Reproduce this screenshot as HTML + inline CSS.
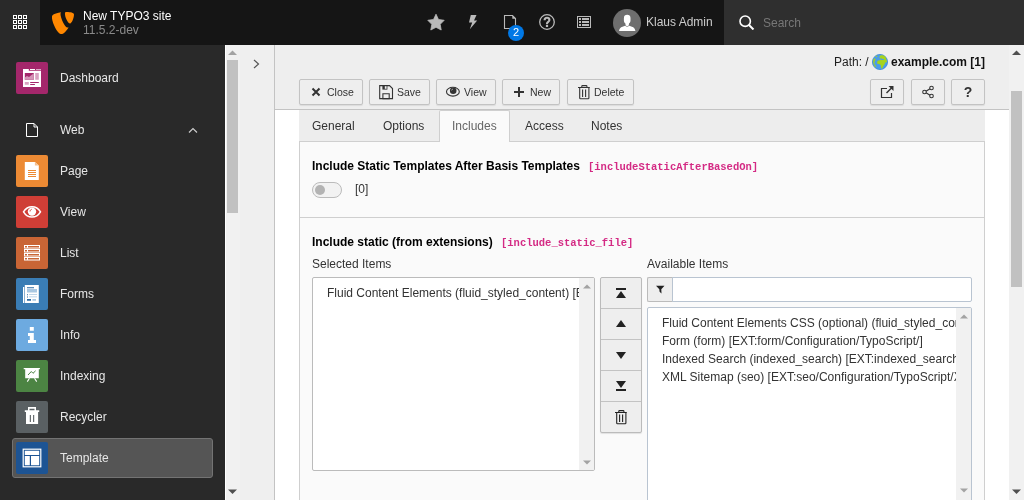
<!DOCTYPE html>
<html><head><meta charset="utf-8">
<style>
*{box-sizing:border-box;margin:0;padding:0}
html,body{width:1024px;height:500px;overflow:hidden;background:#fff;font-family:"Liberation Sans",sans-serif;font-size:12px;color:#333}
.abs{position:absolute}
#hdr{position:absolute;left:0;top:0;width:1024px;height:45px;background:#151515}
#grid{position:absolute;left:0;top:0;width:40px;height:45px;background:#292929}
#side{position:absolute;left:0;top:45px;width:225px;height:455px;background:#292929}
.mi{position:absolute;left:16px;width:32px;height:32px;border-radius:2px}
.ml{position:absolute;left:60px;color:#e6e6e6;font-size:12px;line-height:14px}
#sscroll{position:absolute;left:225px;top:45px;width:15px;height:455px;background:#f1f1f1;border-left:1px solid #fff}
#tree{position:absolute;left:240px;top:45px;width:35px;height:455px;background:#efefef;border-right:1px solid #c3c3c3}
#dochdr{position:absolute;left:275px;top:45px;width:734px;height:65px;background:#eee;border-bottom:1px solid #c3c3c3}
#body{position:absolute;left:275px;top:110px;width:734px;height:390px;background:#fff}
#pscroll{position:absolute;left:1009px;top:45px;width:15px;height:455px;background:#f1f1f1}
.btn{position:absolute;top:79px;height:26px;background:#eee;border:1px solid #c3c3c3;border-radius:2px;font-size:10.5px;line-height:24px;color:#333;box-shadow:0 1px 1px rgba(0,0,0,.08)}
.btn svg{position:absolute;left:8px;top:4px}
.btn span{position:absolute;top:0}
#root{position:absolute;left:0;top:0;width:1024px;height:500px;will-change:transform}
</style></head><body><div id="root">
<div id="hdr">
  <div id="grid">
    <svg class="abs" style="left:13px;top:15px" width="14" height="14" viewBox="0 0 14 14" fill="none" stroke="#fff" stroke-width="1"><rect x="0.5" y="0.5" width="3" height="3"/><rect x="5.5" y="0.5" width="3" height="3"/><rect x="10.5" y="0.5" width="3" height="3"/><rect x="0.5" y="5.5" width="3" height="3"/><rect x="5.5" y="5.5" width="3" height="3"/><rect x="10.5" y="5.5" width="3" height="3"/><rect x="0.5" y="10.5" width="3" height="3"/><rect x="5.5" y="10.5" width="3" height="3"/><rect x="10.5" y="10.5" width="3" height="3"/></svg>
  </div>
  <svg class="abs" style="left:52px;top:12px" width="22" height="22" viewBox="-1 0 24.5 24.5">
    <path fill="#ff8700" d="M17.5 17.2c-.4.1-.7.1-1.1.1-3.2 0-7.9-11.2-7.9-14.9 0-1.4.3-1.8.8-2.2C5.3 .7.8 2 -.6 3.8c-.3.4-.5 1.1-.5 1.9 0 5.8 6.2 19 10.6 19 2 0 5.4-3.300 8-7.500M15.4 0c4.100 0 8.100.7 8.100 2.900 0 4.500-2.800 9.900-4.300 9.900-2.600 0-5.800-7.300-5.800-10.900C13.400.3 14 0 15.400 0"/>
  </svg>
  <div class="abs" style="left:83px;top:9px;color:#fff;line-height:14px">New TYPO3 site</div>
  <div class="abs" style="left:83px;top:23px;color:#8a8a8a;line-height:14px">11.5.2-dev</div>

  <!-- toolbar icons -->
  <svg class="abs" style="left:427px;top:13px" width="18" height="18" viewBox="0 0 18 18"><path fill="#bababa" stroke="#bababa" stroke-width="0.8" stroke-linejoin="round" d="M9 1.2L11.500 6.500 17.200 7.300 13.200 11.300 14.200 17 9 14.300 3.800 17 4.800 11.300 .8 7.300 6.500 6.500z"/></svg>
  <svg class="abs" style="left:468px;top:14px" width="10" height="16" viewBox="0 0 10 16"><path fill="#bababa" d="M2.800 1h5.700L6 6.500h3.200L1.800 15.300 4.200 8.500H1z"/></svg>
  <svg class="abs" style="left:503px;top:14px" width="14" height="16" viewBox="0 0 14 16"><path fill="none" stroke="#bababa" stroke-width="1.100" d="M1.500 1.500h8l3 3v10h-11z"/><path fill="#bababa" d="M9.300 1.500v3.200h3.200z"/></svg>
  <div class="abs" style="left:508px;top:25px;width:16px;height:16px;border-radius:8px;background:#0078e6;color:#fff;font-size:11px;line-height:15px;text-align:center">2</div>
  <svg class="abs" style="left:539px;top:14px" width="16" height="16" viewBox="0 0 16 16"><circle cx="8" cy="8" r="7.300" fill="none" stroke="#bababa" stroke-width="1.300"/><path fill="none" stroke="#bababa" stroke-width="2.100" d="M5.600 6.300c0-1.600 1.100-2.500 2.400-2.500 1.400 0 2.400.9 2.400 2.200 0 1.800-2.400 1.800-2.400 3.600v.6"/><rect x="6.900" y="11" width="2.200" height="2" fill="#bababa"/></svg>
  <svg class="abs" style="left:577px;top:16px" width="14" height="12" viewBox="0 0 14 12"><rect x=".5" y=".5" width="13" height="11" fill="none" stroke="#bababa" stroke-width="1"/><g fill="#bababa"><rect x="2" y="2" width="2" height="2"/><rect x="5" y="2" width="7" height="2"/><rect x="2" y="5" width="2" height="2"/><rect x="5" y="5" width="7" height="2"/><rect x="2" y="8" width="2" height="2"/><rect x="5" y="8" width="7" height="2"/></g></svg>
  <div class="abs" style="left:613px;top:9px;width:28px;height:28px;border-radius:14px;background:#6e6e6e;overflow:hidden"><svg class="abs" style="left:0;top:0" width="28" height="28" viewBox="0 0 28 28"><path fill="#fff" d="M14.200 5.800c2 0 3.300 1.100 3.300 3.200v2.600c0 1.500-.8 2.600-1.600 3.100v1.600l-1.700 1.200-1.700-1.200v-1.600c-.8-.5-1.600-1.600-1.600-3.100V9c0-2.100 1.300-3.200 3.300-3.200zM6 22c.3-2.500 1.500-3.800 3.500-4.300l2.600-1 2.100 1.400 2.100-1.400 2.600 1c2 .5 3.200 1.800 3.500 4.300z"/></svg></div>
  <div class="abs" style="left:646px;top:15px;color:#ccc;line-height:14px">Klaus Admin</div>
  <div class="abs" style="left:724px;top:0;width:300px;height:45px;background:#2f2f2f"></div>
  <svg class="abs" style="left:739px;top:15px" width="16" height="15" viewBox="0 0 16 15"><circle cx="6.2" cy="6.2" r="5.2" fill="none" stroke="#fff" stroke-width="1.6"/><path d="M10 10l4.500 4.500" stroke="#fff" stroke-width="2"/></svg>
  <div class="abs" style="left:763px;top:16px;color:#777;line-height:14px">Search</div>
</div>

<div id="side">
  <div class="mi" style="top:17px;background:#a4276b"><svg width="32" height="32" viewBox="0 0 32 32"><path fill="#fff" d="M7 8.800h18V25H7z M7 7h5.800v2H7z M14 7h5v1h-5z"/><path fill="#fff" fill-opacity=".6" d="M20 7h5v1h-5z"/><path fill="#a4276b" d="M8.800 11h9v6.800h-9z"/><path fill="#d494b6" d="M8.800 17.800v-2.300l2.200-1.500 2 1 2.500-2 2.300-1.500v6.300z"/><path fill="#d9a3c1" d="M19.200 11h3.600v6.800h-3.600zM8.800 20h4v2.800h-4z"/><path fill="#a4276b" d="M14.200 20h8.600v1h-8.600zM14.200 22h4.700v1h-4.700z"/></svg></div>
  <div class="ml" style="top:26px">Dashboard</div>
  <svg class="abs" style="left:25px;top:78px" width="14" height="14" viewBox="0 0 14 14"><path fill="none" stroke="#fff" stroke-width="1" d="M1.500.500h7.500l3.500 3.500v9.500h-11z"/><path fill="none" stroke="#fff" stroke-width="1" d="M9 .500v3.500h3.500"/></svg>
  <div class="ml" style="top:78px">Web</div>
  <svg class="abs" style="left:188px;top:82px" width="10" height="6" viewBox="0 0 10 6"><path fill="none" stroke="#ccc" stroke-width="1.2" d="M1 5.500l4-4 4 4"/></svg>
  <div class="mi" style="top:110px;background:#ec8a34"><svg width="32" height="32" viewBox="0 0 32 32"><path fill="#fff" d="M8.800 7h10.100l3.900 3.600V25H8.800z"/><path fill="#f5c08f" d="M18.900 7v3.600h3.900z"/><path fill="#ec8a34" d="M12 15h8v1h-8zM12 17h8v1h-8zM12 19h8v1h-8zM12 21h8v1h-8z"/></svg></div><div class="ml" style="top:119px">Page</div>
  <div class="mi" style="top:151px;background:#cf3e36"><svg width="32" height="32" viewBox="0 0 32 32"><path fill="none" stroke="#fff" stroke-width="1.500" d="M7.500 15.800C9.500 12.500 12.500 10.700 16 10.700s6.500 1.800 8.500 5.100c-2 3.300-5 5.200-8.500 5.200s-6.500-1.900-8.500-5.200z"/><circle cx="16" cy="15.600" r="4.200" fill="#fff"/><path fill="none" stroke="#cf3e36" stroke-width=".9" d="M14 15.500c0-1.200.8-2 1.800-2.200"/></svg></div><div class="ml" style="top:160px">View</div>
  <div class="mi" style="top:192px;background:#c96535"><svg width="32" height="32" viewBox="0 0 32 32"><g fill="none" stroke="#fff" stroke-width="1"><rect x="8.500" y="8.500" width="15" height="2.500"/><rect x="8.500" y="12.500" width="15" height="2.500"/><rect x="8.500" y="16.500" width="15" height="2.500"/><rect x="8.500" y="20.500" width="15" height="2.500"/></g><g fill="#fff"><rect x="11" y="9" width="1" height="2"/><rect x="11" y="13" width="1" height="2"/><rect x="11" y="17" width="1" height="2"/><rect x="11" y="21" width="1" height="2"/></g></svg></div><div class="ml" style="top:201px">List</div>
  <div class="mi" style="top:233px;background:#3a7db5"><svg width="32" height="32" viewBox="0 0 32 32"><path fill="#fff" d="M7 9h1.200v16H7zM8.800 7h14v18h-14z"/><path fill="#2c6ba3" d="M11 9.200h7v1h-7zM11 16.200h1v1h-1zM11 18.400h1v1h-1zM11 21h4v1.800h-4z"/><path fill="#a9c8e2" d="M11 11h10v3.500H11zM13 16.300h8v.8h-8zM13 18.500h8v.8h-8zM16.400 21h3.600v1.800h-3.600z"/></svg></div><div class="ml" style="top:242px">Forms</div>
  <div class="mi" style="top:274px;background:#6daae0"><svg width="32" height="32" viewBox="0 0 32 32"><path fill="#fff" d="M13.800 8h4v3.700h-4zM12 14h5.800v7H20v3h-8v-3h1.800v-4H12z"/></svg></div><div class="ml" style="top:283px">Info</div>
  <div class="mi" style="top:315px;background:#4c8443"><svg width="32" height="32" viewBox="0 0 32 32"><path fill="#fff" d="M7.700 8h16.200v1.200H7.700zM9.200 9h13.600v9.200H9.200z"/><path fill="none" stroke="#fff" stroke-width="1.100" d="M13.500 18.300l-2.200 3.300M18.500 18.300l2.200 3.300"/><path fill="none" stroke="#4c8443" stroke-width="1" d="M12 15l3.300-3.500 1.700 1.800 2.600-2.500"/></svg></div><div class="ml" style="top:324px">Indexing</div>
  <div class="mi" style="top:356px;background:#5a6063"><svg width="32" height="32" viewBox="0 0 32 32"><path fill="#fff" d="M12 6h8v3.200h-8zM8.800 9.200h14.400V11H8.800zM10 11h12.100v11.900H10z"/><path fill="#5a6063" d="M13.500 7.800h5v1.400h-5zM13.800 14h1.100v7h-1.100zM17.100 14h1.100v7h-1.100z"/></svg></div><div class="ml" style="top:365px">Recycler</div>
  <div class="abs" style="left:12px;top:393px;width:201px;height:40px;background:#555;border:1px solid #737373;border-radius:3px"></div>
  <div class="mi" style="top:397px;background:#1d5494"><svg width="32" height="32" viewBox="0 0 32 32"><rect x="7.200" y="7.200" width="17.600" height="17.600" fill="none" stroke="#fff" stroke-width="1.200"/><path fill="#fff" d="M8.800 8.800h14.400V13H8.800zM8.800 14h5v9.200h-5zM15 14h8.200v9.200H15z"/></svg></div><div class="ml" style="top:406px">Template</div>
</div>

<div id="sscroll"></div>
<div class="abs" style="left:227px;top:60px;width:11px;height:153px;background:#c1c1c1"></div>
<svg class="abs" style="left:228px;top:50px" width="9" height="6" viewBox="0 0 9 6"><path fill="#a3a3a3" d="M0 5L4.500 .5 9 5z"/></svg>
<svg class="abs" style="left:228px;top:489px" width="9" height="6" viewBox="0 0 9 6"><path fill="#505050" d="M0 0.5h9L4.500 5z"/></svg>
<div id="tree"></div>
<svg class="abs" style="left:253px;top:59px" width="7" height="10" viewBox="0 0 7 10"><path fill="none" stroke="#555" stroke-width="1.2" d="M1 1l4.500 4L1 9"/></svg>
<div id="dochdr"></div>
<div class="abs" style="left:834px;top:55px;line-height:14px;color:#1e1e1e">Path: /</div>
<svg class="abs" style="left:872px;top:54px" width="16" height="16" viewBox="0 0 16 16"><circle cx="8" cy="8" r="7.600" fill="#4c9ce8" stroke="#3a86d4" stroke-width=".8"/><path fill="#a6d31c" d="M8.300 1.600C10 1 12.300 1.500 13.600 3l1 3 .5 2.500-1.300-.4-1.200 2.200-1.400 2-1 2.400-1-.4-.6-3.400-1.500-1-1.600.1L5 8l1-1.500h1.600l.5-1.300 1.600.3.4-1L7.600 4.300 7.500 3z"/><path fill="#4c9ce8" d="M8.800 5h3.200v1H8.800z"/><path fill="#a6d31c" d="M1.600 5L3 4.200l.5 1.600-1 2.200v2.500L4 12l-.4 1.400L2 11.300 1.100 8zM3.800 1.800h1.300v1.200H3.800z"/></svg>
<div class="abs" style="left:891px;top:55px;line-height:14px;color:#111;font-weight:bold">example.com [1]</div>

<div class="btn" style="left:299px;width:64px"><svg width="16" height="16" viewBox="0 0 16 16"><path stroke="#333" stroke-width="2" d="M4.500 4.500l7 7M11.500 4.500l-7 7"/></svg><span style="left:27px">Close</span></div>
<div class="btn" style="left:369px;width:61px"><svg width="16" height="16" viewBox="0 0 16 16"><path fill="none" stroke="#333" stroke-width="1.100" d="M1.700 1.600h9.800l3 3v10h-12.800z"/><path fill="#333" d="M4.400 1.300h5v4.300h-5z"/><path fill="#eee" d="M6.800 2.200h1.800v2.600H6.800z"/><path fill="none" stroke="#333" stroke-width="1.100" d="M4.900 9.700h6.300v5H4.900z"/></svg><span style="left:27px">Save</span></div>
<div class="btn" style="left:436px;width:60px"><svg width="16" height="16" viewBox="0 0 16 16"><ellipse cx="7.900" cy="7.700" rx="6.400" ry="4.400" fill="none" stroke="#333" stroke-width="1.100"/><circle cx="8.200" cy="6.700" r="3.300" fill="#333"/><path fill="none" stroke="#ddd" stroke-width=".8" d="M6.600 6.400c.1-.7.5-1.100 1.100-1.200"/></svg><span style="left:27px">View</span></div>
<div class="btn" style="left:502px;width:58px"><svg width="16" height="16" viewBox="0 0 16 16"><path stroke="#333" stroke-width="2" d="M8 3v10M3 8h10"/></svg><span style="left:27px">New</span></div>
<div class="btn" style="left:567px;width:67px"><svg width="16" height="16" viewBox="0 0 16 16"><path fill="none" stroke="#333" stroke-width="1.100" d="M2 3.500h11.800M5.800 3.500V2.300c0-.4.300-.7.700-.7h3.700c.4 0 .7.300.7.700v1.200M3.700 3.500v10.400c0 .5.300.8.800.8h7.600c.5 0 .8-.3.8-.8V3.500M6.600 5.500v7.500M9.600 5.500v7.500"/></svg><span style="left:26px">Delete</span></div>

<div class="btn" style="left:870px;width:34px"><svg width="16" height="16" viewBox="0 0 16 16"><path fill="none" stroke="#333" stroke-width="1.200" d="M8 4.500H2.500v9h10V9"/><path fill="none" stroke="#333" stroke-width="1.400" d="M7.500 9l6-6"/><path fill="#333" d="M9.500 2h5v5z"/></svg></div>
<div class="btn" style="left:911px;width:34px"><svg width="16" height="16" viewBox="0 0 16 16"><circle cx="4.500" cy="8" r="1.800" fill="none" stroke="#333" stroke-width="1.100"/><circle cx="11.500" cy="4" r="1.800" fill="none" stroke="#333" stroke-width="1.100"/><circle cx="11.500" cy="12" r="1.800" fill="none" stroke="#333" stroke-width="1.100"/><path stroke="#333" stroke-width="1.100" d="M6 7.200L10 4.800M6 8.800L10 11.200"/></svg></div>
<div class="btn" style="left:951px;width:34px;text-align:center;font-weight:bold;font-size:14px">?</div>

<div id="body"></div>
<!-- tabs -->
<div class="abs" style="left:299px;top:110px;width:686px;height:32px;background:#ededed;border-bottom:1px solid #cfcfcf"></div>
<div class="abs" style="left:312px;top:119px;line-height:14px;color:#333">General</div>
<div class="abs" style="left:383px;top:119px;line-height:14px;color:#333">Options</div>
<div class="abs" style="left:439px;top:110px;width:71px;height:32px;background:#fafafa;border:1px solid #cfcfcf;border-bottom:none;border-radius:2px 2px 0 0"></div>
<div class="abs" style="left:452px;top:119px;line-height:14px;color:#666">Includes</div>
<div class="abs" style="left:525px;top:119px;line-height:14px;color:#333">Access</div>
<div class="abs" style="left:591px;top:119px;line-height:14px;color:#333">Notes</div>

<!-- fieldset -->
<div class="abs" style="left:299px;top:142px;width:686px;height:400px;background:#fafafa;border:1px solid #cfcfcf;border-top:none"></div>
<div class="abs" style="left:300px;top:217px;width:684px;height:1px;background:#cfcfcf"></div>
<div class="abs" style="left:312px;top:159px;line-height:14px;color:#000;font-weight:bold">Include Static Templates After Basis Templates</div>
<div class="abs" style="left:588px;top:160px;line-height:14px;color:#d42a84;font-weight:bold;font-family:'Liberation Mono',monospace;font-size:10.5px">[includeStaticAfterBasedOn]</div>
<div class="abs" style="left:312px;top:182px;width:30px;height:16px;border-radius:8px;background:#f2f2f2;border:1px solid #bbb"></div>
<div class="abs" style="left:315px;top:185px;width:10px;height:10px;border-radius:5px;background:#b3b3b3"></div>
<div class="abs" style="left:355px;top:182px;line-height:14px;color:#333">[0]</div>

<div class="abs" style="left:312px;top:235px;line-height:14px;color:#000;font-weight:bold">Include static (from extensions)</div>
<div class="abs" style="left:501px;top:236px;line-height:14px;color:#d42a84;font-weight:bold;font-family:'Liberation Mono',monospace;font-size:10.5px">[include_static_file]</div>
<div class="abs" style="left:312px;top:257px;line-height:14px;color:#333">Selected Items</div>
<div class="abs" style="left:647px;top:257px;line-height:14px;color:#333">Available Items</div>

<div class="abs" style="left:312px;top:277px;width:283px;height:194px;background:#fff;border:1px solid #bbb;border-radius:2px;overflow:hidden">
  <div class="abs" style="left:14px;top:7px;line-height:16px;white-space:nowrap;color:#333">Fluid Content Elements (fluid_styled_content) [EXT:fluid_styled_content/Configuration/TypoScript/]</div>
  <div class="abs" style="left:266px;top:0;width:15px;height:192px;background:#f1f1f1"></div>
  <svg class="abs" style="left:270px;top:6px" width="8" height="5" viewBox="0 0 8 5"><path fill="#a3a3a3" d="M0 4.500L4 .5l4 4z"/></svg>
  <svg class="abs" style="left:270px;top:182px" width="8" height="5" viewBox="0 0 8 5"><path fill="#a3a3a3" d="M0 .5h8L4 4.500z"/></svg>
</div>

<div class="abs" style="left:600px;top:277px;width:42px;height:156px;background:#eee;border:1px solid #bbb;border-radius:2px;box-shadow:0 1px 1px rgba(0,0,0,.1)"></div>
<div class="abs" style="left:601px;top:308px;width:40px;height:1px;background:#c3c3c3"></div>
<div class="abs" style="left:601px;top:339px;width:40px;height:1px;background:#c3c3c3"></div>
<div class="abs" style="left:601px;top:370px;width:40px;height:1px;background:#c3c3c3"></div>
<div class="abs" style="left:601px;top:401px;width:40px;height:1px;background:#c3c3c3"></div>
<svg class="abs" style="left:613px;top:285px" width="16" height="16" viewBox="0 0 16 16"><path fill="#222" d="M3 3h10v2H3zM8 6l5 7H3z"/></svg>
<svg class="abs" style="left:613px;top:316px" width="16" height="16" viewBox="0 0 16 16"><path fill="#222" d="M8 4l5 7H3z"/></svg>
<svg class="abs" style="left:613px;top:347px" width="16" height="16" viewBox="0 0 16 16"><path fill="#222" d="M8 12L3 5h10z"/></svg>
<svg class="abs" style="left:613px;top:378px" width="16" height="16" viewBox="0 0 16 16"><path fill="#222" d="M3 11h10v2H3zM8 10L3 3h10z"/></svg>
<svg class="abs" style="left:613px;top:409px" width="16" height="16" viewBox="0 0 16 16"><path fill="none" stroke="#222" stroke-width="1.100" d="M2 3.500h11.800M5.800 3.500V2.300c0-.4.300-.7.700-.7h3.700c.4 0 .7.300.7.700v1.200M3.700 3.500v10.400c0 .5.300.8.800.8h7.600c.5 0 .8-.3.8-.8V3.500M6.600 5.500v7.500M9.600 5.500v7.500"/></svg>

<div class="abs" style="left:647px;top:277px;width:26px;height:25px;background:#eee;border:1px solid #bbb;border-right:none;border-radius:2px 0 0 2px"></div>
<div class="abs" style="left:672px;top:277px;width:300px;height:25px;background:#fff;border:1px solid #b9c4d1;border-radius:0 2px 2px 0"></div>
<svg class="abs" style="left:656px;top:285px" width="9" height="9" viewBox="0 0 9 9"><path fill="#222" d="M0 .8h8.500L5.300 4.300l.2 4.200L3.600 6.800 3.300 4.300z"/></svg>
<div class="abs" style="left:647px;top:307px;width:325px;height:200px;background:#fff;border:1px solid #b9c4d1;border-radius:2px;overflow:hidden">
  <div class="abs" style="left:14px;top:6px;line-height:18px;white-space:nowrap;color:#333">Fluid Content Elements CSS (optional) (fluid_styled_content) [EXT:fluid_styled_content/]<br>Form (form) [EXT:form/Configuration/TypoScript/]<br>Indexed Search (indexed_search) [EXT:indexed_search/Configuration/TypoScript/]<br>XML Sitemap (seo) [EXT:seo/Configuration/TypoScript/XmlSitemap]</div>
  <div class="abs" style="left:308px;top:0;width:15px;height:200px;background:#f1f1f1"></div>
  <svg class="abs" style="left:312px;top:6px" width="8" height="5" viewBox="0 0 8 5"><path fill="#a3a3a3" d="M0 4.500L4 .5l4 4z"/></svg>
  <svg class="abs" style="left:312px;top:180px" width="8" height="5" viewBox="0 0 8 5"><path fill="#a3a3a3" d="M0 .5h8L4 4.500z"/></svg>
</div>
<div id="pscroll"></div>
<div class="abs" style="left:1011px;top:91px;width:11px;height:196px;background:#c1c1c1"></div>
<svg class="abs" style="left:1012px;top:50px" width="9" height="6" viewBox="0 0 9 6"><path fill="#505050" d="M0 5L4.500 .5 9 5z"/></svg>
<svg class="abs" style="left:1012px;top:489px" width="9" height="6" viewBox="0 0 9 6"><path fill="#505050" d="M0 .5h9L4.500 5z"/></svg>
</div></body></html>
